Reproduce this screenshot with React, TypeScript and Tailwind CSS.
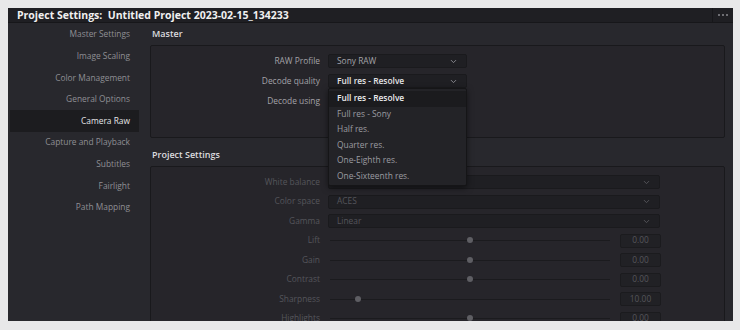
import { ChevronDown } from "lucide-react";

const sideItems = [
  "Master Settings",
  "Image Scaling",
  "Color Management",
  "General Options",
  "Camera Raw",
  "Capture and Playback",
  "Subtitles",
  "Fairlight",
  "Path Mapping",
];

const menuItems = [
  "Full res - Resolve",
  "Full res - Sony",
  "Half res.",
  "Quarter res.",
  "One-Eighth res.",
  "One-Sixteenth res.",
];

const sliders = [
  { label: "Lift", pos: 50, value: "0.00" },
  { label: "Gain", pos: 50, value: "0.00" },
  { label: "Contrast", pos: 50, value: "0.00" },
  { label: "Sharpness", pos: 10, value: "10.00" },
  { label: "Highlights", pos: 50, value: "0.00" },
];

function Select({ value, bright, dim, wide }: { value: string; bright?: boolean; dim?: boolean; wide?: boolean }) {
  return (
    <div
      className={`flex items-center justify-between h-[14px] rounded-[2px] bg-[#1f1f23] border border-[#1a1a1d] pl-[8px] pr-[8px] ${
        wide ? "w-[332px]" : "w-[139px]"
      }`}
    >
      <span
        className={
          bright ? "text-[#e4e4e6] font-semibold" : dim ? "text-[#55555b]" : "text-[#a3a3a8]"
        }
      >
        {value}
      </span>
      <ChevronDown size={9} strokeWidth={2.5} className={dim ? "text-[#55555b]" : "text-[#8a8a90]"} />
    </div>
  );
}

function Label({ text, dim }: { text: string; dim?: boolean }) {
  return (
    <div className={`w-[177px] shrink-0 text-right pr-[8px] ${dim ? "text-[#55555b]" : "text-[#a3a3a8]"}`}>
      {text}
    </div>
  );
}

export default function App() {
  return (
    <div
      className="w-[740px] h-[330px] bg-[#e8e8e9] pt-[8px] pl-[8px] overflow-hidden text-[8.4px]"
      style={{ fontFamily: '"Open Sans", "Noto Sans", sans-serif' }}
    >
      <div className="w-[725px] h-[313px] bg-[#28282d] flex flex-col overflow-hidden">
        {/* Title bar */}
        <div className="h-[15px] flex bg-[#1f1f23] border-b border-[#17171a]">
          <div className="flex-1 pl-[9px] text-[10.5px] font-bold text-[#f0f0f0] leading-[15px] whitespace-pre">
            Project Settings:  Untitled Project 2023-02-15_134233
          </div>
          <div className="w-[21px] border-l border-[#17171a] flex items-center justify-center gap-[2px]">
            <span className="w-[2px] h-[2px] rounded-full bg-[#8a8a8f]" />
            <span className="w-[2px] h-[2px] rounded-full bg-[#8a8a8f]" />
            <span className="w-[2px] h-[2px] rounded-full bg-[#8a8a8f]" />
          </div>
        </div>

        <div className="flex flex-1 min-h-0">
          {/* Sidebar */}
          <div className="w-[131px] shrink-0 pt-[1px] pl-[2px]">
            {sideItems.map((s) => (
              <div
                key={s}
                className={`h-[21.6px] flex items-center justify-end pr-[9px] ${
                  s === "Camera Raw" ? "bg-[#1c1c1f] text-[#e6e6e8]" : "text-[#8f8f94]"
                }`}
              >
                {s}
              </div>
            ))}
          </div>

          {/* Main */}
          <div className="flex-1 pl-[11px] pr-[8px] relative">
            <div className="h-[22px] flex items-center pl-[2px] text-[9px] font-semibold text-[#dcdcdf]">Master</div>
            <div className="h-[93px] bg-[#26252a] border border-[#19191c] rounded-[2px] pt-[8px]">
              <div className="flex flex-col gap-[6px]">
                <div className="flex items-center h-[14px]">
                  <Label text="RAW Profile" />
                  <Select value="Sony RAW" />
                </div>
                <div className="flex items-center h-[14px]">
                  <Label text="Decode quality" />
                  <Select value="Full res - Resolve" bright />
                </div>
                <div className="flex items-center h-[14px]">
                  <Label text="Decode using" />
                </div>
              </div>
            </div>

            <div className="h-[28px] flex items-end pb-[5px] pl-[2px] text-[9px] font-semibold text-[#dcdcdf]">
              Project Settings
            </div>
            <div className="h-[160px] bg-[#26252a] border border-[#19191c] rounded-[2px] pt-[8px]">
              <div className="flex flex-col gap-[5.5px]">
                <div className="flex items-center h-[14px]">
                  <Label text="White balance" dim />
                  <Select value="" dim wide />
                </div>
                <div className="flex items-center h-[14px]">
                  <Label text="Color space" dim />
                  <Select value="ACES" dim wide />
                </div>
                <div className="flex items-center h-[14px]">
                  <Label text="Gamma" dim />
                  <Select value="Linear" dim wide />
                </div>
                {sliders.map((s) => (
                  <div key={s.label} className="flex items-center h-[14px]">
                    <Label text={s.label} dim />
                    <div className="w-[280px] ml-[2px] h-[1px] bg-[#1b1b1e] relative">
                      <span
                        className="absolute top-[-3px] w-[6px] h-[6px] rounded-full bg-[#5e5e63]"
                        style={{ left: `calc(${s.pos}% - 3px)` }}
                      />
                    </div>
                    <div className="ml-[10px] w-[41px] h-[14px] bg-[#212125] border border-[#1b1b1e] rounded-[2px] flex items-center justify-center text-[#55555b]">
                      {s.value}
                    </div>
                  </div>
                ))}
              </div>
            </div>

            {/* Dropdown menu */}
            <div className="absolute left-[189px] top-[65px] w-[139px] bg-[#232327] border border-[#151517] rounded-[2px] shadow-[0_2px_6px_rgba(0,0,0,0.5)] pt-[2px] pb-[1px]">
              {menuItems.map((m, i) => (
                <div
                  key={m}
                  className={`h-[15.5px] flex items-center pl-[8px] ${
                    i === 0 ? "bg-[#1b1b1e] text-[#ececee] font-semibold" : "text-[#9c9ca1]"
                  }`}
                >
                  {m}
                </div>
              ))}
            </div>
          </div>
        </div>
      </div>
    </div>
  );
}
